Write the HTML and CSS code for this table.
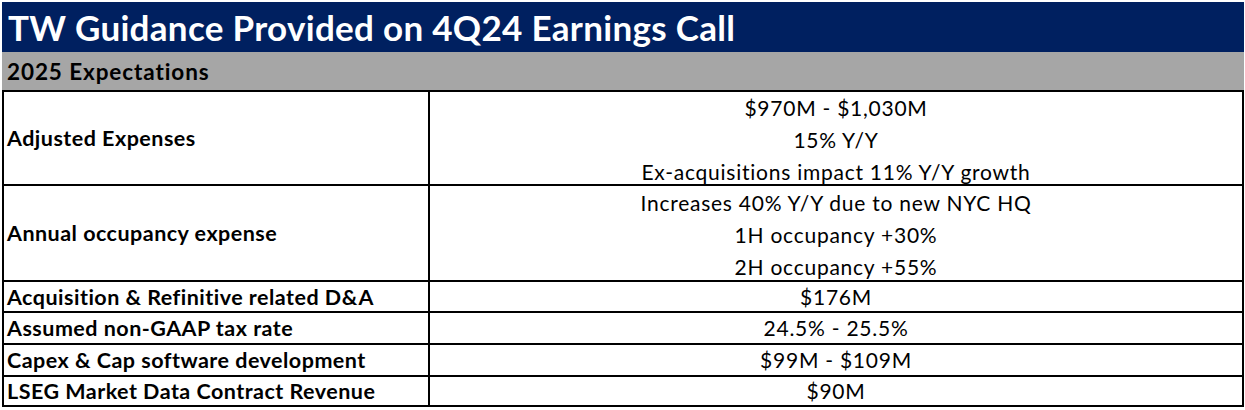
FILE: index.html
```html
<!DOCTYPE html>
<html lang="en">
<head>
<meta charset="utf-8">
<title>TW Guidance</title>
<link rel="stylesheet" href="styles.css">
</head>
<body>
<div class="sheet">
  <div class="title">TW Guidance Provided on 4Q24 Earnings Call</div>
  <div class="subtitle">2025 Expectations</div>
  <div class="grid">
    <div class="label">Adjusted Expenses</div>
    <div class="value multi">
      <span>$970M - $1,030M</span>
      <span>15% Y/Y</span>
      <span>Ex-acquisitions impact 11% Y/Y growth</span>
    </div>
    <div class="label">Annual occupancy expense</div>
    <div class="value multi">
      <span>Increases 40% Y/Y due to new NYC HQ</span>
      <span>1H occupancy +30%</span>
      <span>2H occupancy +55%</span>
    </div>
    <div class="label">Acquisition &amp; Refinitive related D&amp;A</div>
    <div class="value"><span>$176M</span></div>
    <div class="label">Assumed non-GAAP tax rate</div>
    <div class="value"><span>24.5% - 25.5%</span></div>
    <div class="label">Capex &amp; Cap software development</div>
    <div class="value"><span>$99M - $109M</span></div>
    <div class="label">LSEG Market Data Contract Revenue</div>
    <div class="value"><span>$90M</span></div>
  </div>
</div>
</body>
</html>
```

FILE: styles.css
```css
html, body {
  margin: 0;
  padding: 0;
  background: #ffffff;
}

body {
  padding: 2px 1px 0 2px;
  font-family: Lato, "Open Sans", "Liberation Sans", sans-serif;
  color: #000000;
}

.sheet {
  width: 1242px;
  display: flex;
  flex-direction: column;
}

.title {
  height: 50px;
  background: #002060;
  color: #ffffff;
  font-weight: 700;
  font-size: 35px;
  line-height: 50px;
  padding-left: 6px;
  letter-spacing: 0.3px;
}

.subtitle {
  height: 38px;
  background: #a6a6a6;
  font-weight: 700;
  font-size: 22.5px;
  line-height: 39px;
  padding-left: 5px;
  letter-spacing: 0.9px;
}

.grid {
  display: grid;
  grid-template-columns: 424px 812px;
  grid-template-rows: 92px 94px 29px 30px 30px 28px;
  gap: 2px;
  padding: 2px;
  background: #000000;
}

.label,
.value {
  background: #ffffff;
  font-size: 21px;
  display: flex;
  flex-direction: column;
  justify-content: center;
}

.label {
  font-weight: 700;
  font-size: 21.5px;
  padding-left: 3px;
  letter-spacing: 0.48px;
  white-space: nowrap;
}

.value {
  align-items: center;
  line-height: 32px;
  letter-spacing: 0.75px;
}

.value.multi {
  padding-top: 3px;
}
```
